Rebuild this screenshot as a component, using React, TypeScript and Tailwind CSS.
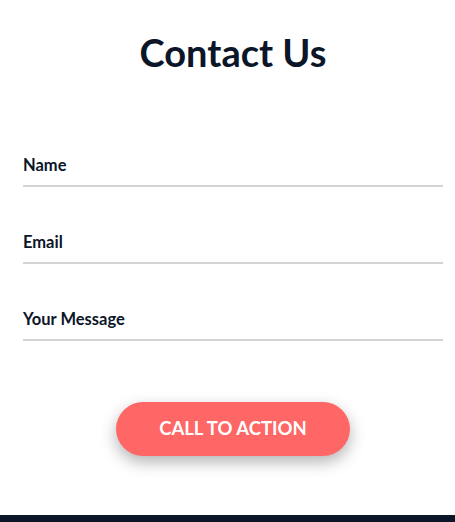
export default function App() {
  const fields = ["Name", "Email", "Your Message"]

  return (
    <div className="min-h-screen bg-white font-['Lato',sans-serif] flex flex-col">
      <div className="flex-1 pl-[23px] pr-[12px]">
        {/* Title */}
        <h1 className="text-center text-[38px] leading-[44px] font-bold text-[#0b1628] pt-[30px]">
          Contact Us
        </h1>

        {/* Fields */}
        <form className="mt-[81px]">
          {fields.map((label) => (
            <label
              key={label}
              className="block border-b-2 border-[#d4d4d4] pb-[10px] mb-[45px] last:mb-0 text-[16.5px] leading-[20px] font-bold text-[#0b1628]"
            >
              {label}
            </label>
          ))}

          {/* Button */}
          <div className="flex justify-center mt-[61px]">
            <button
              type="button"
              className="w-[234px] h-[54px] rounded-full bg-[#ff6666] text-white text-[18.5px] font-bold shadow-[0_6px_16px_rgba(0,0,0,0.3)]"
            >
              CALL TO ACTION
            </button>
          </div>
        </form>
      </div>

      {/* Footer */}
      <div className="h-[7px] bg-[#0b1628]" />
    </div>
  )
}
